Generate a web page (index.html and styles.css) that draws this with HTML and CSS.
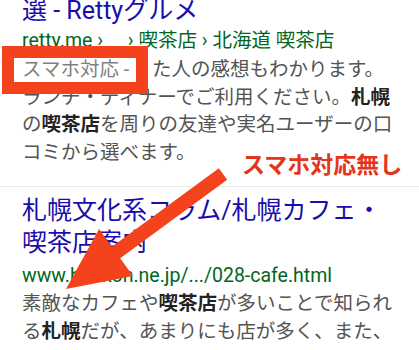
FILE: index.html
```html
<!DOCTYPE html>
<html>

<head>
    <meta charset="UTF-8">
    <meta name="viewport" content="width=device-width, initial-scale=1.0">
    <link rel="stylesheet" href="styles.css">
    <title>札幌 喫茶店 - 検索</title>
</head>

<body>
    <div class="results">
        <div class="result first">
            <a class="title" href="#">選 - Rettyグルメ</a>
            <div class="url">retty.me ›&emsp;&nbsp;› 喫茶店 › 北海道 喫茶店</div>
            <div class="snippet"><span class="label">スマホ対応 - </span>た人の感想もわかります。ランチ・ディナーでご利用ください。<b>札幌</b>の<b>喫茶店</b>を周りの友達や実名ユーザーの口コミから選べます。</div>
        </div>
        <div class="result">
            <a class="title" href="#">札幌文化系コラム/札幌カフェ・喫茶店案内</a>
            <div class="url">www.hokkon.ne.jp/.../028-cafe.html</div>
            <div class="snippet">素敵なカフェや<b>喫茶店</b>が多いことで知られる<b>札幌</b>だが、あまりにも店が多く、また、</div>
        </div>
    </div>

    <!-- 注釈 -->
    <div class="mark-box"></div>
    <div class="note">スマホ対応無し</div>
    <svg class="arrow" width="419" height="350" viewBox="0 0 419 350">
        <line x1="223" y1="174" x2="114" y2="254" stroke="#f4421c" stroke-width="14" />
        <polygon points="66,289 99,229 133,276" fill="#f4421c" />
    </svg>
</body>

</html>
```

FILE: styles.css
```css
body {
    font-family: Roboto, "Noto Sans CJK JP", sans-serif;
    background-color: #ffffff;
    margin: 0;
    padding: 0;
    overflow: hidden;
}

.results {
    width: 419px;
}

.result {
    padding: 8px 22px 0;
}

.result.first {
    margin-top: -13px;
    padding-bottom: 20px;
    border-bottom: 1px solid #ebebeb;
}

.title {
    display: block;
    font-size: 25px;
    line-height: 32px;
    color: #1a0dab;
    text-decoration: none;
}

.url {
    font-size: 19.5px;
    line-height: 28px;
    color: #006621;
    white-space: nowrap;
    margin-top: 3px;
}

.result.first .url {
    margin-top: 0;
}

.snippet {
    font-size: 19.5px;
    line-height: 27.5px;
    color: #545454;
}

.result.first .snippet {
    margin-top: 1px;
}

.snippet b {
    color: #222222;
}

.label {
    color: #808080;
    padding-right: 18px;
}

.mark-box {
    position: absolute;
    left: 2px;
    top: 46px;
    width: 146px;
    height: 48px;
    box-sizing: border-box;
    border: 12px solid #f4421c;
}

.note {
    position: absolute;
    left: 242px;
    top: 154px;
    font-size: 23px;
    line-height: 23px;
    font-weight: bold;
    color: #e5341a;
}

.arrow {
    position: absolute;
    left: 0;
    top: 0;
    pointer-events: none;
}
```
